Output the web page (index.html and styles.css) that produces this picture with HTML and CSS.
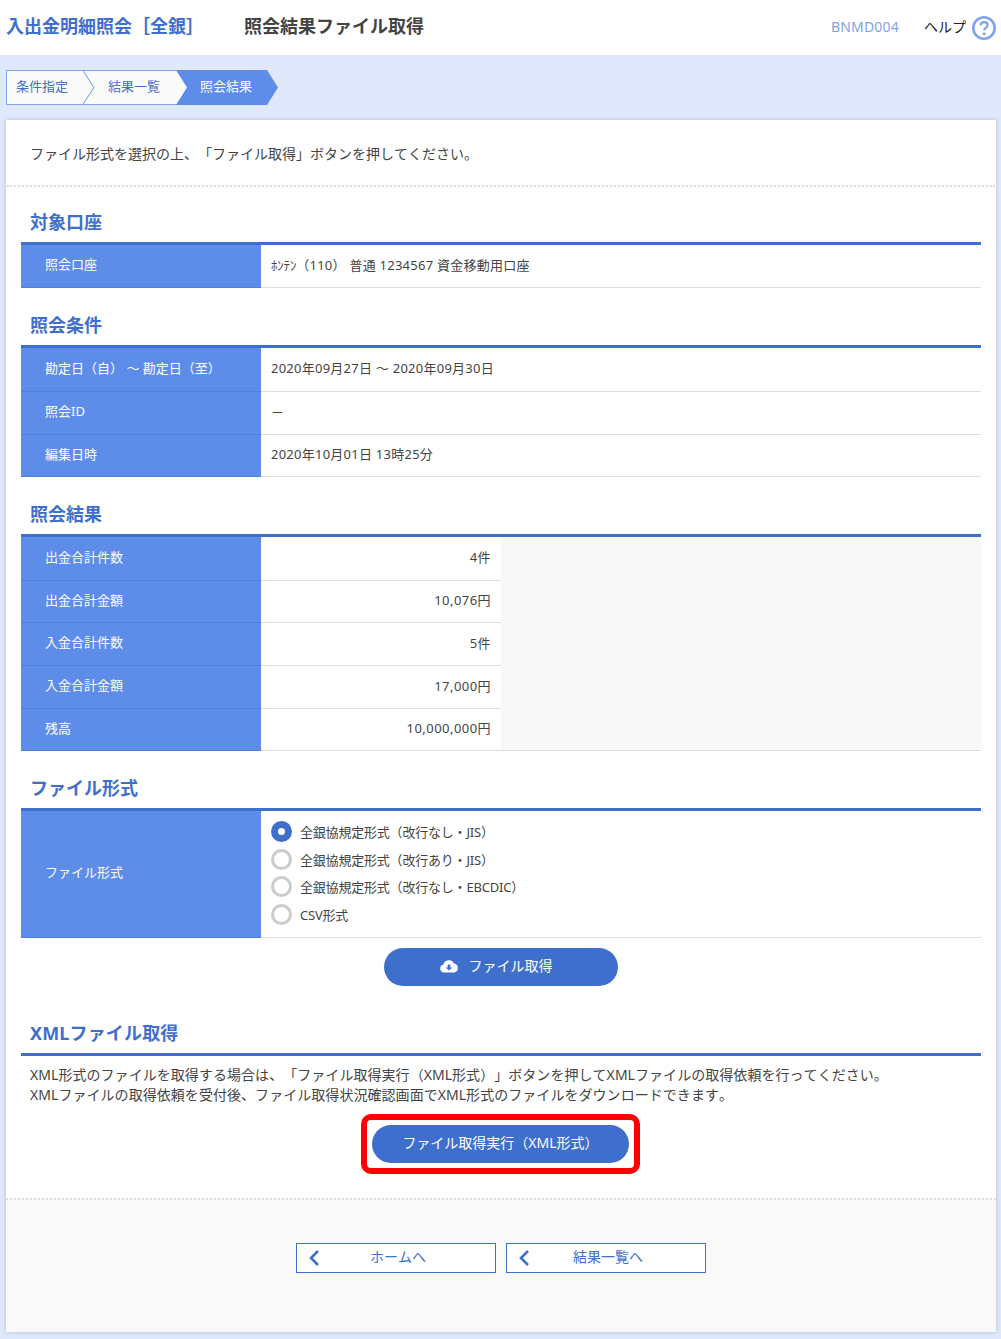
FILE: index.html
```html
<!DOCTYPE html>
<html lang="ja">
<head>
<meta charset="utf-8">
<title>照会結果ファイル取得</title>
<link rel="stylesheet" href="styles.css">
</head>
<body>
<header class="top">
  <h1 class="t-main">入出金明細照会［全銀］</h1>
  <h2 class="t-sub">照会結果ファイル取得</h2>
  <span class="code">BNMD004</span>
  <a class="help"><span class="help-t">ヘルプ</span>
    <svg class="help-ic" width="24" height="24" viewBox="0 0 24 24"><circle cx="12" cy="12" r="10.7" fill="#fff" stroke="#7fa3ea" stroke-width="2.600"/><path d="M8.600 9.400c.2-2 1.600-3.200 3.600-3.200s3.400 1.200 3.400 2.900c0 1.400-.8 2.100-1.800 2.800-1 .7-1.600 1.200-1.600 2.500" fill="none" stroke="#7fa3ea" stroke-width="2.200"/><circle cx="12.200" cy="17.800" r="1.500" fill="#7fa3ea"/></svg>
  </a>
</header>
<div class="steps">
  <svg class="steps-bg" width="272" height="35" viewBox="0 0 272 35"><path d="M.5.5H77L88 17.500 77 34.500H.5Z" fill="#fafafa" stroke="#7fa3ea"/><path d="M77 .5H171L182 17.500 171 34.500H77L88 17.500Z" fill="#fafafa" stroke="#7fa3ea" stroke-width="1"/><path d="M170 0H261L272 17.500 261 35H170L181 17.500Z" fill="#5d8de8"/></svg>
  <span class="step s1">条件指定</span><span class="step s2">結果一覧</span><span class="step s3">照会結果</span>
</div>
<main class="card">
  <p class="intro">ファイル形式を選択の上、「ファイル取得」ボタンを押してください。</p>
  <section class="body">
    <h3 class="sec sec-first">対象口座</h3>
    <div class="tbl">
      <div class="row r43"><div class="th">照会口座</div><div class="td"><span class="kana">ﾎﾝﾃﾝ</span>（110） 普通 1234567 資金移動用口座</div></div>
    </div>
    <h3 class="sec">照会条件</h3>
    <div class="tbl">
      <div class="row r44"><div class="th">勘定日（自） ～ 勘定日（至）</div><div class="td">2020年09月27日 ～ 2020年09月30日</div></div>
      <div class="row r43"><div class="th">照会ID</div><div class="td">－</div></div>
      <div class="row r42"><div class="th">編集日時</div><div class="td">2020年10月01日 13時25分</div></div>
    </div>
    <h3 class="sec">照会結果</h3>
    <div class="tbl">
      <div class="row r44"><div class="th">出金合計件数</div><div class="td num">4件</div><div class="fill"></div></div>
      <div class="row r42"><div class="th">出金合計金額</div><div class="td num">10,076円</div><div class="fill"></div></div>
      <div class="row r43"><div class="th">入金合計件数</div><div class="td num">5件</div><div class="fill"></div></div>
      <div class="row r43"><div class="th">入金合計金額</div><div class="td num">17,000円</div><div class="fill"></div></div>
      <div class="row r42"><div class="th">残高</div><div class="td num">10,000,000円</div><div class="fill fill-last"></div></div>
    </div>
    <h3 class="sec">ファイル形式</h3>
    <div class="tbl">
      <div class="row r127"><div class="th">ファイル形式</div>
        <div class="td radios">
          <div class="radio"><span class="dot on"></span>全銀協規定形式（改行なし・JIS）</div>
          <div class="radio"><span class="dot"></span>全銀協規定形式（改行あり・JIS）</div>
          <div class="radio"><span class="dot"></span>全銀協規定形式（改行なし・EBCDIC）</div>
          <div class="radio"><span class="dot"></span>CSV形式</div>
        </div>
      </div>
    </div>
    <div class="btn-line">
      <button class="btn btn-file">
        <svg width="18" height="14" viewBox="0 0 18 14"><path d="M4.200 13.500A4 4 0 0 1 3.400 5.600 5.600 5.600 0 0 1 14 4.600 4.500 4.500 0 0 1 14 13.500Z" fill="#fff"/><path d="M7.700 5.500h2.600v3h2L9 11.600 5.700 8.500h2Z" fill="#3f6fcc"/></svg>
        ファイル取得
      </button>
    </div>
    <h3 class="sec sec-xml">XMLファイル取得</h3>
    <div class="xml-text">XML形式のファイルを取得する場合は、「ファイル取得実行（XML形式）」ボタンを押してXMLファイルの取得依頼を行ってください。<br>XMLファイルの取得依頼を受付後、ファイル取得状況確認画面でXML形式のファイルをダウンロードできます。</div>
    <div class="hl-line">
      <div class="hl"><button class="btn btn-xml">ファイル取得実行（XML形式）</button></div>
    </div>
  </section>
  <footer class="foot">
    <a class="back"><svg class="chev" width="12" height="18" viewBox="0 0 12 18"><path d="M10 2 3 9l7 7" fill="none" stroke="#3f6fcc" stroke-width="2.600"/></svg>ホームへ</a>
    <a class="back"><svg class="chev" width="12" height="18" viewBox="0 0 12 18"><path d="M10 2 3 9l7 7" fill="none" stroke="#3f6fcc" stroke-width="2.600"/></svg>結果一覧へ</a>
  </footer>
</main>
</body>
</html>
```
FILE: styles.css
```css
* { box-sizing: border-box; }
html, body { margin: 0; padding: 0; }
body {
  background: #dfe9fb;
  height: 1339px;
  overflow: hidden;
  font-family: "Noto Sans", "Noto Sans CJK JP", sans-serif;
  font-size: 13px;
  color: #444;
  text-spacing-trim: space-all;
  font-kerning: none;
}
.top {
  height: 55px;
  background: #fff;
  display: flex;
  align-items: center;
  padding: 0 5px 0 6px;
}
.t-main, .t-sub { margin: 0 0 4px; font-size: 18px; font-weight: 700; line-height: 26px; }
.t-main { color: #3f6fcc; width: 238px; }
.t-sub { color: #444; flex: 1; }
.code { font-size: 14px; letter-spacing: .2px; color: #7fa3ea; margin: 0 25px 3px 0; }
.help { display: flex; align-items: center; gap: 6px; font-size: 14px; color: #222; }
.help-t { margin-bottom: 3px; }
.steps {
  position: relative;
  margin: 15px 0 15px 6px;
  height: 35px;
  display: flex;
}
.steps-bg { position: absolute; left: 0; top: 0; }
.step { position: relative; display: block; line-height: 33px; font-size: 13px; color: #3f6fcc; }
.s1 { margin-left: 10px; width: 92px; }
.s2 { width: 92px; }
.s3 { color: #fff; }
.card {
  margin: 0 5px 0 6px;
  height: 1212px;
  background: #fff;
  box-shadow: 0 0 4px rgba(90,110,160,.35);
  display: flex;
  flex-direction: column;
}
.intro {
  margin: 0 1px;
  height: 67px;
  padding: 0 0 0 23px;
  line-height: 67px;
  font-size: 14px;
  border-bottom: 2px dotted #ddd;
}
.body { padding: 0 15px; }
.sec {
  margin: 0;
  height: 57px;
  padding: 24px 0 0 9px;
  line-height: 26px;
  font-size: 18px;
  font-weight: 700;
  color: #3f6fcc;
}
.sec-first { height: 55px; padding-top: 22px; }
.tbl { border-top: 3px solid #3f6fcc; }
.row { display: flex; }
.r42 { height: 42px; }
.r43 { height: 43px; }
.r44 { height: 44px; }
.r127 { height: 127px; }
.th {
  width: 240px;
  flex: none;
  background: #5d8de8;
  border-bottom: 1px solid #4f7edb;
  color: #fff;
  display: flex;
  align-items: center;
  padding: 0 0 5px 24px;
  white-space: pre;
}
.td {
  display: flex;
  align-items: center;
  padding: 0 0 4px 10px;
  flex: 1;
  color: #444;
  white-space: pre;
  letter-spacing: .25px;
  border-bottom: 1px solid #ddd;
}
.kana { font-size: 13px; letter-spacing: -.2px; }
.num { flex: none; width: 240px; justify-content: flex-end; padding: 0 10px 4px 0; letter-spacing: .45px; }
.fill { flex: 1; background: #f8f8f8; }
.fill-last { border-bottom: 1px solid #ddd; }
.radios { flex-direction: column; align-items: flex-start; justify-content: center; gap: 5.800px; padding-bottom: 2px; letter-spacing: -.2px; }
.radio { display: flex; align-items: center; height: 21.800px; }
.dot {
  width: 21px; height: 21px;
  border-radius: 50%;
  border: 3px solid #ccc;
  background: #fff;
  margin-right: 8px;
}
.dot.on { border: 7px solid #3f6fcc; }
.btn {
  display: flex;
  align-items: center;
  justify-content: center;
  height: 38px;
  border: 0;
  border-radius: 19px;
  background: #3f6fcc;
  color: #fff;
  font-family: inherit;
  font-size: 14px;
  padding: 0 0 5px;
}
.btn-line { display: flex; justify-content: center; margin-top: 10px; }
.btn-file { width: 234px; gap: 11px; padding-right: 10px; }
.btn-file svg { margin-top: 3px; }
.sec-xml { height: 70px; padding-top: 34px; border-bottom: 3px solid #3f6fcc; letter-spacing: .15px; }
.xml-text { padding: 9px 0 0 9px; font-size: 14px; line-height: 20px; letter-spacing: .05px; color: #444; white-space: nowrap; height: 58px; }
.hl-line { display: flex; justify-content: center; }
.hl {
  width: 279px;
  height: 60px;
  border: 6px solid #f00;
  border-radius: 10px;
  padding: 5px;
  margin-right: 1px;
}
.btn-xml { width: 257px; }
.foot {
  flex: 1;
  margin-top: 24px;
  background: #f9f9f9;
  border-top: 2px dotted #ddd;
  display: flex;
  justify-content: center;
  gap: 10px;
  padding-top: 43px;
}
.back {
  position: relative;
  width: 200px;
  height: 30px;
  border: 1px solid #3f6fcc;
  background: #fff;
  color: #3f6fcc;
  font-size: 14px;
  display: flex;
  align-items: center;
  justify-content: center;
  padding: 0 0 4px 4px;
}
.chev { position: absolute; left: 11px; top: 5px; }
```
